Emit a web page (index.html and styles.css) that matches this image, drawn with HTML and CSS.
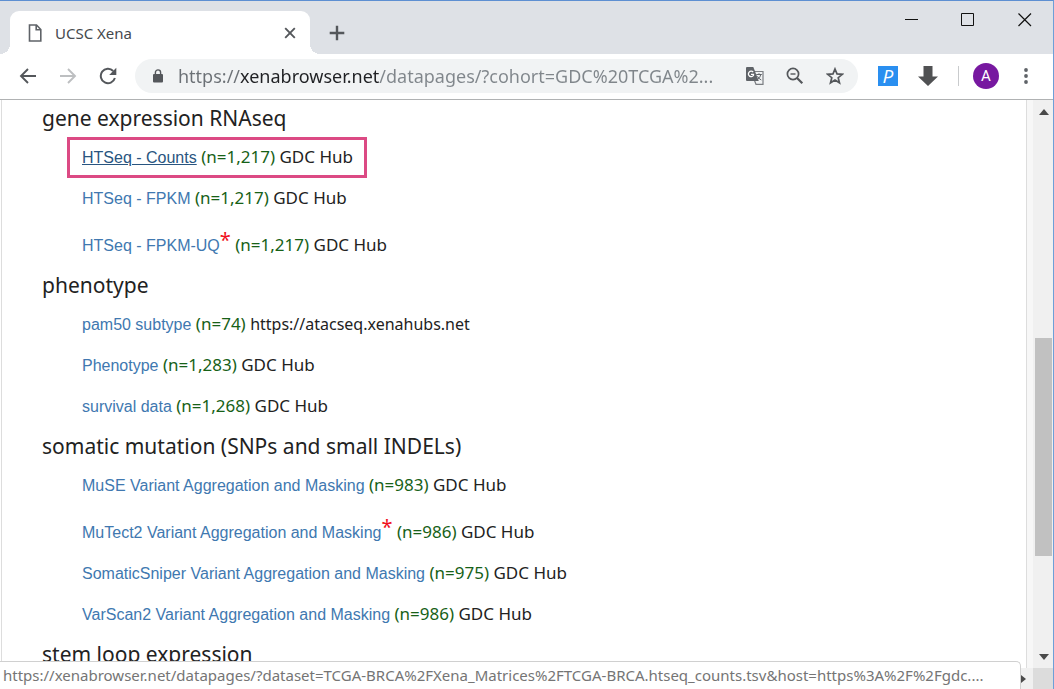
FILE: index.html
```html
<!DOCTYPE html>
<html lang="en">
<head>
<meta charset="utf-8">
<title>UCSC Xena</title>
<link rel="stylesheet" href="styles.css">
</head>
<body>
<div class="window">
  <header class="tabstrip">
    <div class="tab">
      <svg class="tab-icon" width="14" height="18" viewBox="0 0 14 18" fill="none" stroke="#5f6368" stroke-width="1.6"><path d="M1.500 1H8.500L12.800 5.500V17H1.500Z"/><path d="M8.200 1V5.800H12.800"/></svg>
      <span class="tab-title">UCSC Xena</span>
      <button class="icon-btn tab-close" aria-label="Close tab"><svg width="12" height="12" viewBox="0 0 12 12" stroke="#54575b" stroke-width="1.9"><path d="M1.200 1.200L10.800 10.800M10.800 1.200L1.200 10.800"/></svg></button>
    </div>
    <button class="icon-btn new-tab" aria-label="New tab"><svg width="16" height="16" viewBox="0 0 16 16" stroke="#54575b" stroke-width="2.400"><path d="M8 .7V15.300M.7 8H15.300"/></svg></button>
    <div class="window-controls">
      <button class="icon-btn" aria-label="Minimize"><svg width="14" height="14" viewBox="0 0 14 14" stroke="#111" stroke-width="1"><path d="M1 6.500H14"/></svg></button>
      <button class="icon-btn" aria-label="Maximize"><svg width="14" height="14" viewBox="0 0 14 14" fill="none" stroke="#111" stroke-width="1"><path d="M.5 .5H12.500V12.500H.5Z"/></svg></button>
      <button class="icon-btn" aria-label="Close"><svg width="14" height="14" viewBox="0 0 14 14" stroke="#111" stroke-width="1.200"><path d="M.5 .5L13 13M13 .5L.5 13"/></svg></button>
    </div>
  </header>

  <div class="toolbar">
    <nav class="nav-buttons">
      <button class="icon-btn" aria-label="Back"><svg width="18" height="18" viewBox="0 0 18 18" fill="none" stroke="#54575b" stroke-width="1.900"><path d="M17 9H2.500M9 2L2 9L9 16"/></svg></button>
      <button class="icon-btn" aria-label="Forward"><svg width="18" height="18" viewBox="0 0 18 18" fill="none" stroke="#bdbfc1" stroke-width="1.900"><path d="M1 9H15.500M9 2L16 9L9 16"/></svg></button>
      <button class="icon-btn" aria-label="Reload"><svg width="18" height="18" viewBox="0 0 18 18"><path d="M15.900 11A7.200 7.200 0 1 1 14.200 4" fill="none" stroke="#54575b" stroke-width="2"/><path d="M17.300 .8V8H10.200Z" fill="#54575b"/></svg></button>
    </nav>
    <div class="omnibox">
      <svg class="lock" width="12" height="14" viewBox="0 0 12 14"><rect x="1" y="5" width="10" height="8.500" rx="1" fill="#54575b"/><path d="M3.400 5.500V3.500a2.600 2.600 0 0 1 5.200 0V5.500" fill="none" stroke="#54575b" stroke-width="1.400"/></svg>
      <input class="url" type="text" aria-label="Address" value="https://xenabrowser.net/datapages/?cohort=GDC%20TCGA%2...">
      <button class="icon-btn" aria-label="Translate this page"><svg width="18" height="18" viewBox="0 0 18 18"><path d="M7 4.500H17V17.300H10L8.500 13.500" fill="#f1f3f4" stroke="#7b7e82" stroke-width="1.200"/><path d="M1 0H7.300L12.800 14H1Q0 14 0 13V1Q0 0 1 0Z" fill="#5f6368"/><path d="M7.200 5.200A2.700 2.700 0 1 0 7.500 8.200V7.300H5" fill="none" stroke="#fff" stroke-width="1.300"/><path d="M10.300 7.500H15.800M13 6.200V7.500M14.800 7.500Q14 11 11.800 12.400M11.500 9.300Q13 12 15.300 13" fill="none" stroke="#5f6368" stroke-width="1"/></svg></button>
      <button class="icon-btn" aria-label="Zoom"><svg width="18" height="18" viewBox="0 0 18 18" fill="none" stroke="#54575b"><circle cx="7" cy="7" r="5.600" stroke-width="1.700"/><path d="M4.500 7H9.500" stroke-width="1.400"/><path d="M11 11L16.300 16.300" stroke-width="2.200"/></svg></button>
      <button class="icon-btn" aria-label="Bookmark this page"><svg width="18" height="18" viewBox="0 0 18 18" fill="none" stroke="#54575b" stroke-width="1.700"><path d="M9 2L11 6.900L16.300 7.300L12.200 10.700L13.500 15.800L9 13L4.500 15.800L5.800 10.700L1.700 7.300L7 6.900Z"/></svg></button>
    </div>
    <div class="extensions">
      <button class="icon-btn ext-p" aria-label="P extension">P</button>
      <button class="icon-btn" aria-label="Download extension"><svg width="20" height="20" viewBox="0 0 20 20" fill="#505153"><path d="M5.500 0H14.500V10.500H20L10 20L0 10.500H5.500Z"/></svg></button>
      <span class="divider"></span>
      <button class="icon-btn avatar" aria-label="Profile A">A</button>
      <button class="icon-btn menu" aria-label="Menu"><svg width="4" height="16" viewBox="0 0 4 16" fill="#5f6368"><circle cx="2" cy="2" r="1.900"/><circle cx="2" cy="8" r="1.900"/><circle cx="2" cy="14" r="1.900"/></svg></button>
    </div>
  </div>

  <div class="viewport">
    <main class="page">
      <section class="group">
        <h3 class="group-title">gene expression RNAseq</h3>
        <ul class="datasets">
          <li class="dataset highlighted"><a class="hovered" href="#">HTSeq - Counts</a> <span class="count">(n=1,217)</span> GDC Hub</li>
          <li class="dataset"><a href="#">HTSeq - FPKM</a> <span class="count">(n=1,217)</span> GDC Hub</li>
          <li class="dataset starred"><a href="#">HTSeq - FPKM-UQ</a><sup class="star">*</sup> <span class="count">(n=1,217)</span> GDC Hub</li>
        </ul>
      </section>
      <section class="group">
        <h3 class="group-title">phenotype</h3>
        <ul class="datasets">
          <li class="dataset"><a href="#">pam50 subtype</a> <span class="count">(n=74)</span> <span class="host">https://atacseq.xenahubs.net</span></li>
          <li class="dataset"><a href="#">Phenotype</a> <span class="count">(n=1,283)</span> GDC Hub</li>
          <li class="dataset"><a href="#">survival data</a> <span class="count">(n=1,268)</span> GDC Hub</li>
        </ul>
      </section>
      <section class="group">
        <h3 class="group-title">somatic mutation (SNPs and small INDELs)</h3>
        <ul class="datasets">
          <li class="dataset"><a href="#">MuSE Variant Aggregation and Masking</a> <span class="count">(n=983)</span> GDC Hub</li>
          <li class="dataset starred"><a href="#">MuTect2 Variant Aggregation and Masking</a><sup class="star">*</sup> <span class="count">(n=986)</span> GDC Hub</li>
          <li class="dataset"><a href="#">SomaticSniper Variant Aggregation and Masking</a> <span class="count">(n=975)</span> GDC Hub</li>
          <li class="dataset"><a href="#">VarScan2 Variant Aggregation and Masking</a> <span class="count">(n=986)</span> GDC Hub</li>
        </ul>
      </section>
      <section class="group">
        <h3 class="group-title">stem loop expression</h3>
      </section>
    </main>
    <div class="gutter"></div>
    <div class="scrollbar">
      <svg class="arrow" width="10" height="6" viewBox="0 0 10 6"><path d="M5 0L10 6H0Z" fill="#4a4a4a"/></svg>
      <div class="track"><div class="thumb"></div></div>
      <svg class="arrow" width="10" height="6" viewBox="0 0 10 6"><path d="M0 0H10L5 6Z" fill="#4a4a4a"/></svg>
    </div>
  </div>
  <div class="hscroll">
    <svg width="5" height="8" viewBox="0 0 5 8"><path d="M0 0L5 4L0 8Z" fill="#4a4a4a"/></svg>
    <div class="corner"></div>
  </div>
  <div class="status">https://xenabrowser.net/datapages/?dataset=TCGA-BRCA%2FXena_Matrices%2FTCGA-BRCA.htseq_counts.tsv&amp;host=https%3A%2F%2Fgdc....</div>
</div>
</body>
</html>
```
FILE: styles.css
```css
* { box-sizing: border-box; }

body {
  margin: 0;
  font-family: "Noto Sans", "Open Sans", sans-serif;
  font-size: 16px;
  color: #222;
}

.window {
  position: relative;
  display: flex;
  flex-direction: column;
  height: 100vh;
  overflow: hidden;
  background: #fff;
  border-top: 1px solid #5d8fd2;
  border-right: 1px solid #6d9fd8;
}

.icon-btn {
  display: flex;
  align-items: center;
  justify-content: center;
  flex: none;
  padding: 0;
  border: 0;
  background: none;
}

/* Tab strip */
.tabstrip {
  display: flex;
  flex: none;
  align-items: flex-end;
  height: 53px;
  padding-left: 10px;
  background: #dee1e6;
}

.tab {
  position: relative;
  display: flex;
  align-items: center;
  width: 300px;
  height: 43px;
  padding: 0 14px 0 18px;
  border-radius: 9px 9px 0 0;
  background: #fff;
}

.tab::before,
.tab::after {
  content: "";
  position: absolute;
  bottom: 0;
  width: 10px;
  height: 10px;
}

.tab::before {
  left: -10px;
  background: radial-gradient(circle at 0 0, transparent 10px, #fff 10px);
}

.tab::after {
  right: -10px;
  background: radial-gradient(circle at 100% 0, transparent 10px, #fff 10px);
}

.tab-title {
  flex: 1;
  margin-left: 13px;
  font-size: 15px;
  color: #45494d;
}

.new-tab {
  align-self: center;
  width: 16px;
  margin: 10px 0 0 19px;
}

.window-controls {
  display: flex;
  align-self: flex-start;
  gap: 43px;
  margin-left: auto;
  padding: 12px 21px 0 0;
}

/* Toolbar */
.toolbar {
  display: flex;
  flex: none;
  align-items: center;
  height: 46px;
  padding: 0 25px 2px 19px;
  border-bottom: 1px solid #b0b2b3;
}

.nav-buttons {
  display: flex;
  gap: 22px;
}

.omnibox {
  display: flex;
  flex: 1;
  align-items: center;
  gap: 22px;
  min-width: 0;
  height: 34px;
  margin-left: 18px;
  padding: 0 14px 0 17px;
  border-radius: 17px;
  background: #f1f3f4;
}

.lock { flex: none; }

.url {
  flex: 1;
  min-width: 0;
  height: 30px;
  margin-left: -8px;
  padding: 0;
  border: 0;
  outline: 0;
  font-family: inherit;
  font-size: 18px;
  color: #80868b;
  background: linear-gradient(to right, #6b7075 62px, #202124 62px, #202124 201px, #80868b 201px);
  -webkit-background-clip: text;
  background-clip: text;
  -webkit-text-fill-color: transparent;
}

.extensions {
  display: flex;
  align-items: center;
  gap: 20px;
  margin-left: 20px;
}

.ext-p {
  width: 20px;
  height: 20px;
  font-family: "Open Sans", sans-serif;
  font-size: 19px;
  font-style: italic;
  color: #fff;
  background: #2a8ff0;
}

.divider {
  width: 1px;
  height: 20px;
  background: #c9cbcd;
}

.avatar {
  width: 26px;
  height: 26px;
  margin-left: -6px;
  border-radius: 50%;
  font-family: Roboto, sans-serif;
  font-size: 15px;
  color: #fff;
  background: #7718a0;
}

.menu { margin-left: 5px; }

/* Page */
.viewport {
  display: flex;
  flex: 1;
  min-height: 0;
}

.page {
  flex: 1;
  overflow: hidden;
  padding-left: 40px;
  margin-left: 1px;
  border-left: 1px solid #ddd;
  border-right: 1px solid #ddd;
}

.group + .group { margin-top: 1px; }

.group-title {
  margin: 0;
  font-size: 21px;
  font-weight: 400;
  line-height: 37px;
  white-space: nowrap;
}

.datasets {
  margin: 0;
  padding: 0 0 0 40px;
  list-style: none;
}

.dataset {
  font-size: 17px;
  line-height: 40px;
  white-space: nowrap;
}

.dataset a {
  font-family: "Liberation Sans", Arial, sans-serif;
  font-size: 16px;
  color: #4078b0;
  text-decoration: none;
}

.dataset a.hovered {
  color: #295580;
  text-decoration: underline;
}

.starred { padding-top: 6px; }

.dataset .host { font-size: 16px; }

.highlighted {
  width: fit-content;
  margin-left: -15px;
  padding: 0 11px 0 12px;
  border: 3px solid #dc4a84;
  line-height: 34px;
}

.count { color: #176117; }

.star {
  font-size: 20px;
  line-height: 0;
  vertical-align: 4px;
  color: #f01020;
}

/* Scrollbars */
.gutter {
  width: 6px;
  background: #f7f7f7;
}

.scrollbar {
  display: flex;
  flex-direction: column;
  align-items: center;
  width: 20px;
  padding: 9px 1px 8px 2px;
  background: #f0f0f0;
}

.track {
  flex: 1;
  width: 100%;
  padding-top: 223px;
}

.thumb {
  height: 218px;
  background: #c1c1c1;
}

.hscroll {
  display: flex;
  flex: none;
  align-items: center;
  justify-content: flex-end;
  gap: 7px;
  height: 21px;
  background: #f0f0f0;
}

.corner {
  width: 20px;
  height: 100%;
  background: #dcdcdc;
}

.status {
  position: absolute;
  left: 0;
  right: 32px;
  bottom: 0;
  height: 28px;
  padding: 0 0 0 3px;
  border-top: 1px solid #d0d0d0;
  border-right: 1px solid #d0d0d0;
  border-radius: 0 5px 0 0;
  overflow: hidden;
  font-size: 15px;
  line-height: 27px;
  white-space: nowrap;
  color: #757575;
  background: #fff;
}
```
